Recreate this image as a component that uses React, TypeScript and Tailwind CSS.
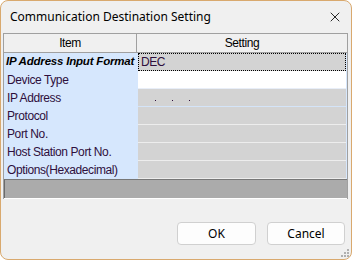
import { X } from "lucide-react";

type Row = {
  label: string;
  value?: string;
  kind: "gray" | "white" | "focus" | "ip";
  strong?: boolean;
};

const rows: Row[] = [
  { label: "IP Address Input Format", value: "DEC", kind: "focus", strong: true },
  { label: "Device Type", kind: "white" },
  { label: "IP Address", kind: "ip" },
  { label: "Protocol", kind: "gray" },
  { label: "Port No.", kind: "gray" },
  { label: "Host Station Port No.", kind: "gray" },
  { label: "Options(Hexadecimal)", kind: "gray" },
];

function ValueCell({ row }: { row: Row }) {
  if (row.kind === "white") {
    return <div className="flex-1 h-full bg-white border-b border-[#e8eef8]" />;
  }
  if (row.kind === "focus") {
    return (
      <div className="flex-1 h-full bg-[#d3d3d3] border border-dotted border-black flex items-center pl-[2px] text-[#2e0f3c]">
        {row.value}
      </div>
    );
  }
  if (row.kind === "ip") {
    return (
      <div className="flex-1 h-full bg-[#d3d3d3] border-b border-[#d4e4f8] flex items-center pl-[17px] gap-[16px] text-[#2e0f3c] leading-none">
        <span className="mt-[6px] w-[1px] h-[1px] bg-[#2e0f3c]" />
        <span className="mt-[6px] w-[1px] h-[1px] bg-[#2e0f3c]" />
        <span className="mt-[6px] w-[1px] h-[1px] bg-[#2e0f3c]" />
      </div>
    );
  }
  return <div className="flex-1 h-full bg-[#d3d3d3] border-b border-[#ededed]" />;
}

export default function App() {
  return (
    <div className="w-[352px] h-[260px] bg-[#f0f0f0] border border-[#d9a96e] rounded-[8px] overflow-hidden flex flex-col font-['Noto_Sans',sans-serif]">
      <div className="h-[32px] flex items-center justify-between pl-[9px] pr-[8px] text-[12px] text-black">
        <span>Communication Destination Setting</span>
        <X size={16} strokeWidth={1.25} className="text-black" />
      </div>

      <div className="ml-[2px] w-[345px] border border-[#a0a0a0] border-b-0 font-['Liberation_Sans',sans-serif] text-[12px] tracking-[-0.4px] bg-[#f0f0f0]">
        <div className="flex h-[19px] border-b border-[#a0a0a0]">
          <div className="w-[133px] flex items-center justify-center border-r border-[#a0a0a0] text-black">
            Item
          </div>
          <div className="flex-1 flex items-center justify-center text-black">Setting</div>
        </div>
        {rows.map((row) => (
          <div key={row.label} className="flex h-[18px]">
            <div
              className={
                row.strong
                  ? "w-[134px] h-full bg-[#d6e7fd] flex items-center pl-[2px] font-bold italic text-black whitespace-nowrap overflow-hidden text-[11.5px] tracking-[-0.2px]"
                  : "w-[134px] h-full bg-[#d6e7fd] flex items-center pl-[3px] text-[#2e0f3c] whitespace-nowrap"
              }
            >
              {row.label}
            </div>
            <div className="flex-1 h-full flex pr-[1px] bg-[#d6e7fd]">
              <ValueCell row={row} />
            </div>
          </div>
        ))}
        <div className="h-[19px] bg-[#ababab] border-t border-[#777777] border-l border-l-[#6b6b6b]" />
        <div className="h-[1px] bg-white" />
      </div>

      <div className="flex justify-end gap-[11px] pr-[6px] mt-[23px] font-['Noto_Sans',sans-serif] text-[12px]">
        <button className="w-[79px] h-[23px] bg-[#fdfdfd] border border-[#d0d0d0] rounded-[4px] text-black">
          OK
        </button>
        <button className="w-[78px] h-[23px] bg-[#fdfdfd] border border-[#d0d0d0] rounded-[4px] text-black">
          Cancel
        </button>
      </div>

      <div className="flex-1 flex justify-end items-end pr-[2px] pb-[2px]">
        <svg width="8" height="8" viewBox="0 0 8 8">
          <rect x="6" y="0" width="2" height="2" fill="#b0b0b0" />
          <rect x="3" y="3" width="2" height="2" fill="#b0b0b0" />
          <rect x="6" y="3" width="2" height="2" fill="#b0b0b0" />
          <rect x="0" y="6" width="2" height="2" fill="#b0b0b0" />
          <rect x="3" y="6" width="2" height="2" fill="#b0b0b0" />
          <rect x="6" y="6" width="2" height="2" fill="#b0b0b0" />
        </svg>
      </div>
    </div>
  );
}
